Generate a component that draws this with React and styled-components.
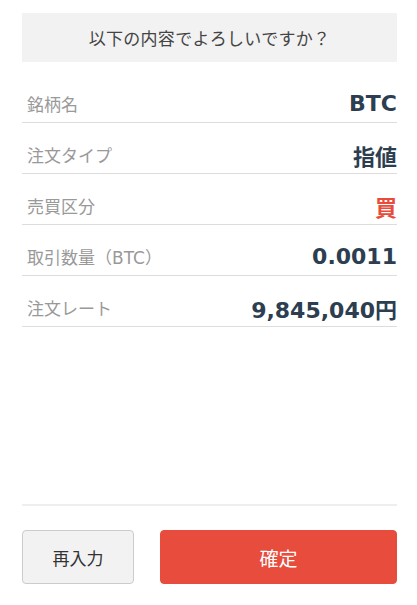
import React from 'react'
import styled, { createGlobalStyle } from 'styled-components'

const GlobalStyle = createGlobalStyle`
  html, body {
    margin: 0;
    padding: 0;
    background: #fff;
  }
  body {
    font-family: "DejaVu Sans", "Noto Sans CJK JP", sans-serif;
  }
`

const Page = styled.div`
  display: flex;
  flex-direction: column;
  min-height: 605px;
  padding: 13px 20px 0 22px;
  box-sizing: border-box;
`

const Question = styled.div`
  height: 49px;
  display: flex;
  align-items: center;
  justify-content: center;
  background: #f2f2f2;
  color: #444;
  font-size: 17px;
  letter-spacing: 0.3px;
`

const List = styled.div`
  margin-top: 10px;
`

const Row = styled.div`
  display: flex;
  justify-content: space-between;
  align-items: center;
  height: 51px;
  padding-top: 13px;
  box-sizing: border-box;
  border-bottom: 1px solid #ddd;
`

const Label = styled.span`
  padding-left: 5px;
  color: #999;
  font-size: 17px;
`

const Value = styled.span`
  color: ${p => (p.$buy ? '#e74c3c' : '#2c3e50')};
  font-size: 22px;
  font-weight: bold;
`

const Footer = styled.div`
  margin-top: auto;
  border-top: 2px solid #eee;
  padding: 24px 0 21px;
  display: flex;
  gap: 26px;
`

const Button = styled.button`
  height: 54px;
  border-radius: 4px;
  font-family: inherit;
  font-size: ${p => (p.$primary ? '19px' : '17px')};
  cursor: pointer;
  box-sizing: border-box;
  width: ${p => (p.$primary ? 'auto' : '112px')};
  flex: ${p => (p.$primary ? '1' : 'none')};
  background: ${p => (p.$primary ? '#e74c3c' : '#f2f2f2')};
  color: ${p => (p.$primary ? '#fff' : '#333')};
  border: 1px solid ${p => (p.$primary ? '#e74c3c' : '#ccc')};
`

const rows = [
  { label: '銘柄名', value: 'BTC' },
  { label: '注文タイプ', value: '指値' },
  { label: '売買区分', value: '買', buy: true },
  { label: '取引数量（BTC）', value: '0.0011' },
  { label: '注文レート', value: '9,845,040円' },
]

export default function App() {
  return (
    <>
      <GlobalStyle />
      <Page>
        <Question>以下の内容でよろしいですか？</Question>
        <List>
          {rows.map(r => (
            <Row key={r.label}>
              <Label>{r.label}</Label>
              <Value $buy={r.buy}>{r.value}</Value>
            </Row>
          ))}
        </List>
        <Footer>
          <Button>再入力</Button>
          <Button $primary>確定</Button>
        </Footer>
      </Page>
    </>
  )
}
